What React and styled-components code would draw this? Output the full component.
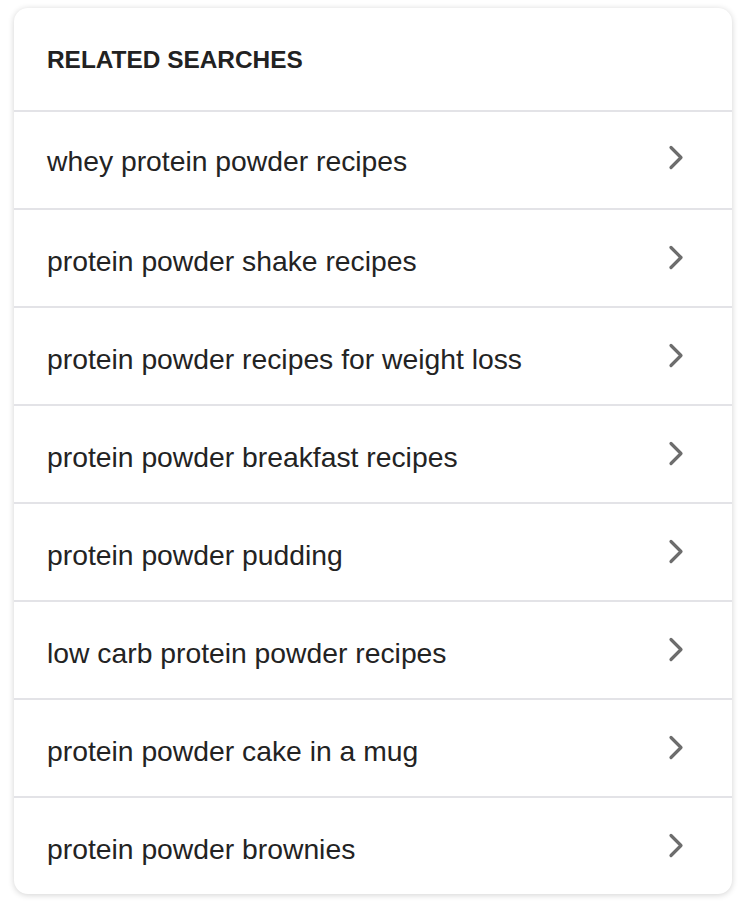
import React from "react";
import styled, { createGlobalStyle } from "styled-components";

const Global = createGlobalStyle`
  body {
    margin: 0;
    background: #fff;
    font-family: "Liberation Sans", Arial, Helvetica, sans-serif;
  }
`;

const Card = styled.div`
  margin: 8px 14px;
  background: #fff;
  border-radius: 14px;
  box-shadow: 0 1px 6px rgba(0, 0, 0, 0.18);
  overflow: hidden;
`;

const Header = styled.div`
  height: 104px;
  box-sizing: border-box;
  display: flex;
  align-items: center;
  padding: 2px 33px 0;
  border-bottom: 2px solid #e3e3e7;
  font-size: 24.4px;
  font-weight: 700;
  color: #222;
`;

const Row = styled.a`
  display: flex;
  align-items: center;
  justify-content: space-between;
  padding: ${(p) => (p.first ? "2px" : "6px")} 48px 0 33px;
  box-sizing: border-box;
  height: ${(p) => (p.first ? "96px" : "98px")};
  border-top: ${(p) => (p.first ? "none" : "2px solid #e3e3e7")};
  color: #232323;
  font-size: 28.3px;
  text-decoration: none;
  cursor: pointer;
`;

const Chevron = () => (
  <svg width="16" height="25" viewBox="0 0 16 25" style={{ marginTop: -8 }}>
    <path
      d="M3 2.5 L13 12.5 L3 22.5"
      fill="none"
      stroke="#6d6d6d"
      strokeWidth="3.2"
      strokeLinecap="round"
      strokeLinejoin="round"
    />
  </svg>
);

const items = [
  "whey protein powder recipes",
  "protein powder shake recipes",
  "protein powder recipes for weight loss",
  "protein powder breakfast recipes",
  "protein powder pudding",
  "low carb protein powder recipes",
  "protein powder cake in a mug",
  "protein powder brownies",
];

export default function App() {
  return (
    <>
      <Global />
      <Card>
        <Header>RELATED SEARCHES</Header>
        {items.map((t, i) => (
          <Row key={t} first={i === 0}>
            <span>{t}</span>
            <Chevron />
          </Row>
        ))}
      </Card>
    </>
  );
}
